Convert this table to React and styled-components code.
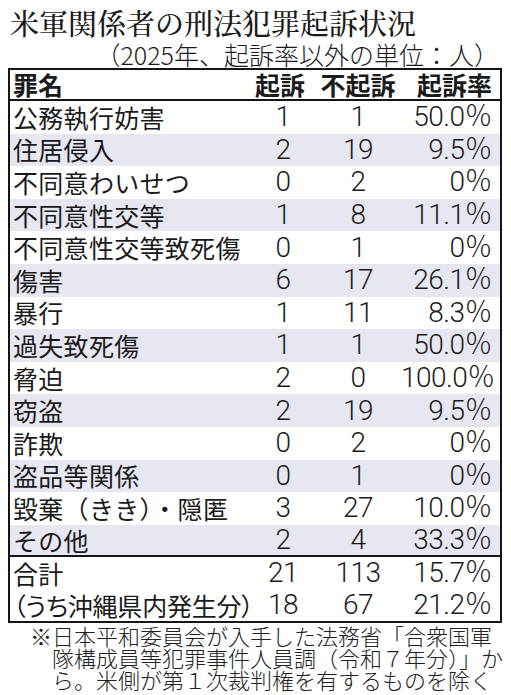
import React from "react";
import styled, { createGlobalStyle } from "styled-components";

const Global = createGlobalStyle`
  html, body { margin: 0; padding: 0; background: #ffffff; }
  body { font-family: "Noto Sans CJK JP", "Noto Sans", sans-serif; color: #1b1b1b; }
`;

const Page = styled.div`
  width: 511px;
  height: 695px;
  background: #fff;
  overflow: hidden;
`;

const Title = styled.h1`
  margin: 6px 0 0 10px;
  font-family: "Noto Serif CJK JP", "Noto Sans CJK JP", serif;
  font-size: 29px;
  line-height: 34px;
  font-weight: 500;
  color: #1b1b1b;
`;

const Subtitle = styled.div`
  text-align: right;
  padding-right: 12px;
  font-size: 25px;
  line-height: 28px;
  font-weight: 300;
  color: #1b1b1b;
`;

const Table = styled.div`
  margin: 0 0 0 8px;
  width: 494px;
  box-sizing: border-box;
  border: 2px solid #161616;
`;

const Row = styled.div`
  display: grid;
  grid-template-columns: minmax(0, 1fr) 64px 86px 91px;
  align-items: center;
  padding: 0 8px 0 3px;
  height: ${(p) => p.$h}px;
  background: ${(p) => (p.$shade ? "#e7e7f1" : "#ffffff")};
  border-bottom: ${(p) => (p.$rule ? "2px solid #161616" : "none")};
  box-sizing: content-box;
`;

const HeadCell = styled.div`
  font-size: 25px;
  font-weight: 700;
  line-height: 1;
  text-align: ${(p) => p.$align || "left"};
  white-space: nowrap;
  margin-right: ${(p) => p.$shift || 0}px;
`;

const Name = styled.div`
  font-size: 25px;
  line-height: 1;
  font-weight: 400;
  white-space: nowrap;
  letter-spacing: ${(p) => (p.$tight ? "-0.2px" : "0.3px")};
  font-feature-settings: ${(p) => (p.$tight ? '"palt" 1' : "normal")};
`;

const Num = styled.div`
  font-family: Roboto, "Noto Sans CJK JP", sans-serif;
  font-weight: 300;
  font-size: 28px;
  line-height: 1;
  letter-spacing: -0.5px;
  text-align: ${(p) => p.$align || "center"};
  white-space: nowrap;
`;

const Note = styled.div`
  margin-top: 1px;
  padding-left: 52px;
  text-indent: -22px;
  font-size: 22px;
  line-height: 22px;
  font-weight: 300;
  color: #222;
  white-space: nowrap;
`;

const rows = [
  ["公務執行妨害", "1", "1", "50.0％"],
  ["住居侵入", "2", "19", "9.5％"],
  ["不同意わいせつ", "0", "2", "0％"],
  ["不同意性交等", "1", "8", "11.1％"],
  ["不同意性交等致死傷", "0", "1", "0％"],
  ["傷害", "6", "17", "26.1％"],
  ["暴行", "1", "11", "8.3％"],
  ["過失致死傷", "1", "1", "50.0％"],
  ["脅迫", "2", "0", "100.0％"],
  ["窃盗", "2", "19", "9.5％"],
  ["詐欺", "0", "2", "0％"],
  ["盗品等関係", "0", "1", "0％"],
  ["毀棄（きき）・隠匿", "3", "27", "10.0％"],
  ["その他", "2", "4", "33.3％"],
];

const totals = [
  ["合計", "21", "113", "15.7％", false],
  ["（うち沖縄県内発生分）", "18", "67", "21.2％", true],
];

export default function App() {
  return (
    <Page>
      <Global />
      <Title>米軍関係者の刑法犯罪起訴状況</Title>
      <Subtitle>（2025年、起訴率以外の単位：人）</Subtitle>
      <Table>
        <Row $h={29} $rule>
          <HeadCell>罪名</HeadCell>
          <HeadCell $align="center" $shift={6}>起訴</HeadCell>
          <HeadCell $align="center">不起訴</HeadCell>
          <HeadCell $align="right">起訴率</HeadCell>
        </Row>
        {rows.map((r, i) => (
          <Row key={r[0]} $h={i === rows.length - 1 ? 30.6 : 32.6} $shade={i % 2 === 1} $rule={i === rows.length - 1}>
            <Name>{r[0]}</Name>
            <Num>{r[1]}</Num>
            <Num>{r[2]}</Num>
            <Num $align="right">{r[3]}</Num>
          </Row>
        ))}
        {totals.map((r) => (
          <Row key={r[0]} $h={32}>
            <Name $tight={r[4]}>{r[0]}</Name>
            <Num>{r[1]}</Num>
            <Num>{r[2]}</Num>
            <Num $align="right">{r[3]}</Num>
          </Row>
        ))}
      </Table>
      <Note>
        ※日本平和委員会が入手した法務省「合衆国軍
        <br />
        隊構成員等犯罪事件人員調（令和７年分）」か
        <br />
        ら。米側が第１次裁判権を有するものを除く
      </Note>
    </Page>
  );
}
